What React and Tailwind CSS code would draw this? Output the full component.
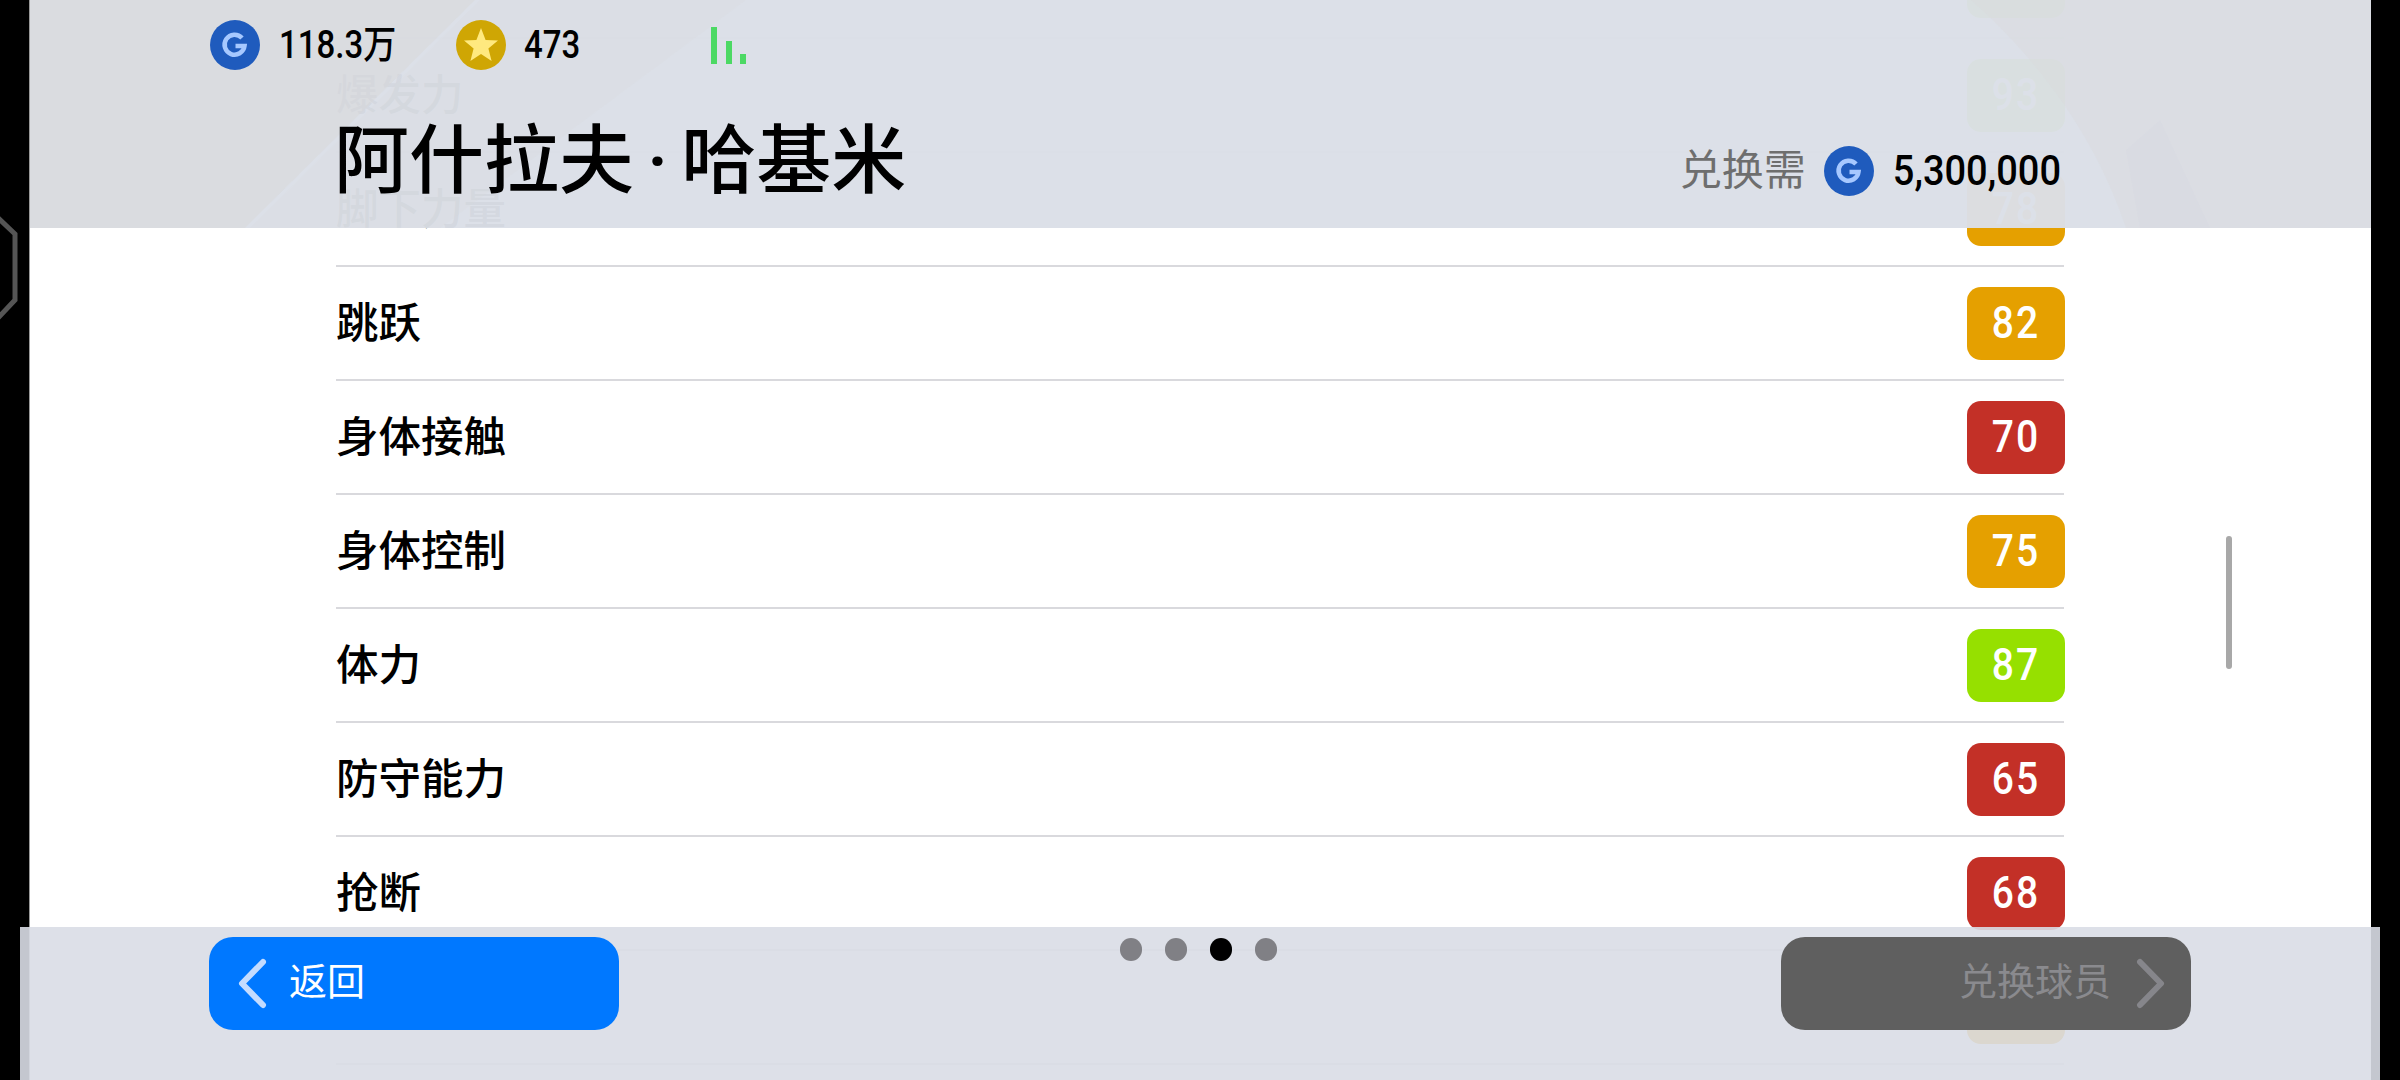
const rows = [
  { label: "加速能力", value: 90, color: "bg-[#96e000]" },
  { label: "爆发力", value: 93, color: "bg-[#96e000]" },
  { label: "脚下力量", value: 78, color: "bg-[#e5a000]" },
  { label: "跳跃", value: 82, color: "bg-[#e5a000]" },
  { label: "身体接触", value: 70, color: "bg-[#c33027]" },
  { label: "身体控制", value: 75, color: "bg-[#e5a000]" },
  { label: "体力", value: 87, color: "bg-[#96e000]" },
  { label: "防守能力", value: 65, color: "bg-[#c33027]" },
  { label: "抢断", value: 68, color: "bg-[#c33027]" },
  { label: "侵略性", value: 75, color: "bg-[#e5a000]" },
];

function GCoin() {
  return (
    <svg width="50" height="50" viewBox="0 0 50 50" className="shrink-0">
      <circle cx="25" cy="25" r="25" fill="#1f5bbd" />
      <path d="M32 18 A10 10 0 1 0 34.5 26 L25.5 26" fill="none" stroke="#a6c8ff" strokeWidth="4.5" />
    </svg>
  );
}

function StarCoin() {
  return (
    <svg width="50" height="50" viewBox="0 0 50 50" className="shrink-0">
      <circle cx="25" cy="25" r="25" fill="#cfa604" />
      <path d="M25 8 L29.6 20 L42 20.6 L32.4 28.6 L35.6 41 L25 34 L14.4 41 L17.6 28.6 L8 20.6 L20.4 20 Z" fill="#ffe97f" />
    </svg>
  );
}

function Chevron({ dir, color }) {
  return (
    <svg width="29" height="51" viewBox="0 0 29 51" className="shrink-0">
      <path
        d={dir === "left" ? "M25 4 L4 25.5 L25 47" : "M4 4 L25 25.5 L4 47"}
        fill="none"
        stroke={color}
        strokeWidth="6"
        strokeLinecap="round"
        strokeLinejoin="round"
      />
    </svg>
  );
}

export default function App() {
  return (
    <div className="relative h-[1080px] w-[2400px] overflow-hidden bg-black font-['Roboto','Noto_Sans_CJK_SC',sans-serif] text-black">
      <svg width="20" height="120" viewBox="0 0 20 120" className="absolute left-0 top-[210px]">
        <path d="M-4 6 L15 24 L15 90 L-4 110" fill="none" stroke="#555" strokeWidth="5" />
      </svg>

      <div className="relative ml-[29px] h-full w-[2342px] overflow-hidden border-l border-[#999] bg-white">
        <div className="ml-[306px] mt-[-75px] w-[1728px]">
          {rows.map((r) => (
            <div key={r.label} className="flex h-[114px] items-center justify-between border-b-2 border-[#d9d9dd]">
              <span className="pt-[2px] text-[42.5px] font-medium leading-none">{r.label}</span>
              <span className={`-mr-px flex h-[73px] w-[98px] items-center justify-center rounded-[14px] text-[39px] font-medium tracking-[2px] text-white ${r.color}`}>
                <span className="scale-y-[1.14]">{r.value}</span>
              </span>
            </div>
          ))}
        </div>
        <div className="absolute left-[2196px] top-[536px] h-[133px] w-[6px] rounded-full bg-[#a8a8a8]" />

        <div className="absolute left-0 top-0 h-[228px] w-full bg-[#dbdfe7]/97">
          <svg width="2342" height="228" viewBox="0 0 2342 228" className="absolute left-0 top-0">
            <path d="M0 0 L445 0 L215 228 L0 228 Z" fill="#d6d6d8" opacity="0.45" />
            <path d="M450 0 L716 0 L410 228 L220 228 Z" fill="#d6d6d8" opacity="0.18" />
            <path d="M1941 0 C2020 70 2070 150 2096 228 L2342 228 L2342 0 Z" fill="#d9d9dd" opacity="0.4" />
            <path d="M2096 150 L2130 120 L2180 228 L2110 228 Z" fill="#d4d7e2" opacity="0.3" />
          </svg>
          <div className="relative flex items-center pl-[180px] pt-[20px] text-[33px] font-medium leading-[50px]">
            <GCoin />
            <span className="ml-[19px] w-[177px] origin-left scale-y-[1.18]">118.3万</span>
            <StarCoin />
            <span className="ml-[18px] scale-y-[1.18]">473</span>
            <svg width="35" height="37" viewBox="0 0 35 37" className="ml-[131px]">
              <rect x="0" y="0" width="6" height="37" fill="#4cd964" />
              <rect x="15" y="14" width="6" height="23" fill="#4cd964" />
              <rect x="29" y="27" width="6" height="10" fill="#4cd964" />
            </svg>
          </div>
          <div className="relative mt-[46px] flex items-center justify-between pl-[304px] pr-[310px]">
            <span className="text-[75px] font-medium leading-[90px]">
              阿什拉夫<span className="mx-[13px]">·</span>哈基米
            </span>
            <span className="mt-[20px] flex items-center">
              <span className="text-[42px] leading-none text-[#6e6e6e]">兑换需</span>
              <span className="ml-[18px]"><GCoin /></span>
              <span className="ml-[19px] scale-y-[1.1] text-[38px] font-medium leading-none">5,300,000</span>
            </span>
          </div>
        </div>
      </div>

      <div className="absolute bottom-0 left-[20px] flex h-[153px] w-[2360px] items-start justify-between bg-[#d9dde6]/90 pl-[189px] pr-[189px] pt-[10px]">
        <button className="flex h-[93px] w-[410px] items-center rounded-[24px] bg-[#0078ff] pl-[29px] text-[38px] text-white">
          <Chevron dir="left" color="#c4dcff" />
          <span className="mb-[4px] ml-[22px] leading-none">返回</span>
        </button>
        <div className="mr-[3px] mt-px flex gap-[23px]">
          <span className="h-[23px] w-[22px] rounded-full bg-[#808085]" />
          <span className="h-[23px] w-[22px] rounded-full bg-[#808085]" />
          <span className="h-[23px] w-[22px] rounded-full bg-black" />
          <span className="h-[23px] w-[22px] rounded-full bg-[#808085]" />
        </div>
        <button className="flex h-[93px] w-[410px] items-center justify-end rounded-[24px] bg-[#5f5f5f] pr-[26px] text-[38px] text-[#8a8a8e]">
          <span className="mb-[4px] mr-[25px] leading-none">兑换球员</span>
          <Chevron dir="right" color="#86868b" />
        </button>
      </div>
    </div>
  );
}
